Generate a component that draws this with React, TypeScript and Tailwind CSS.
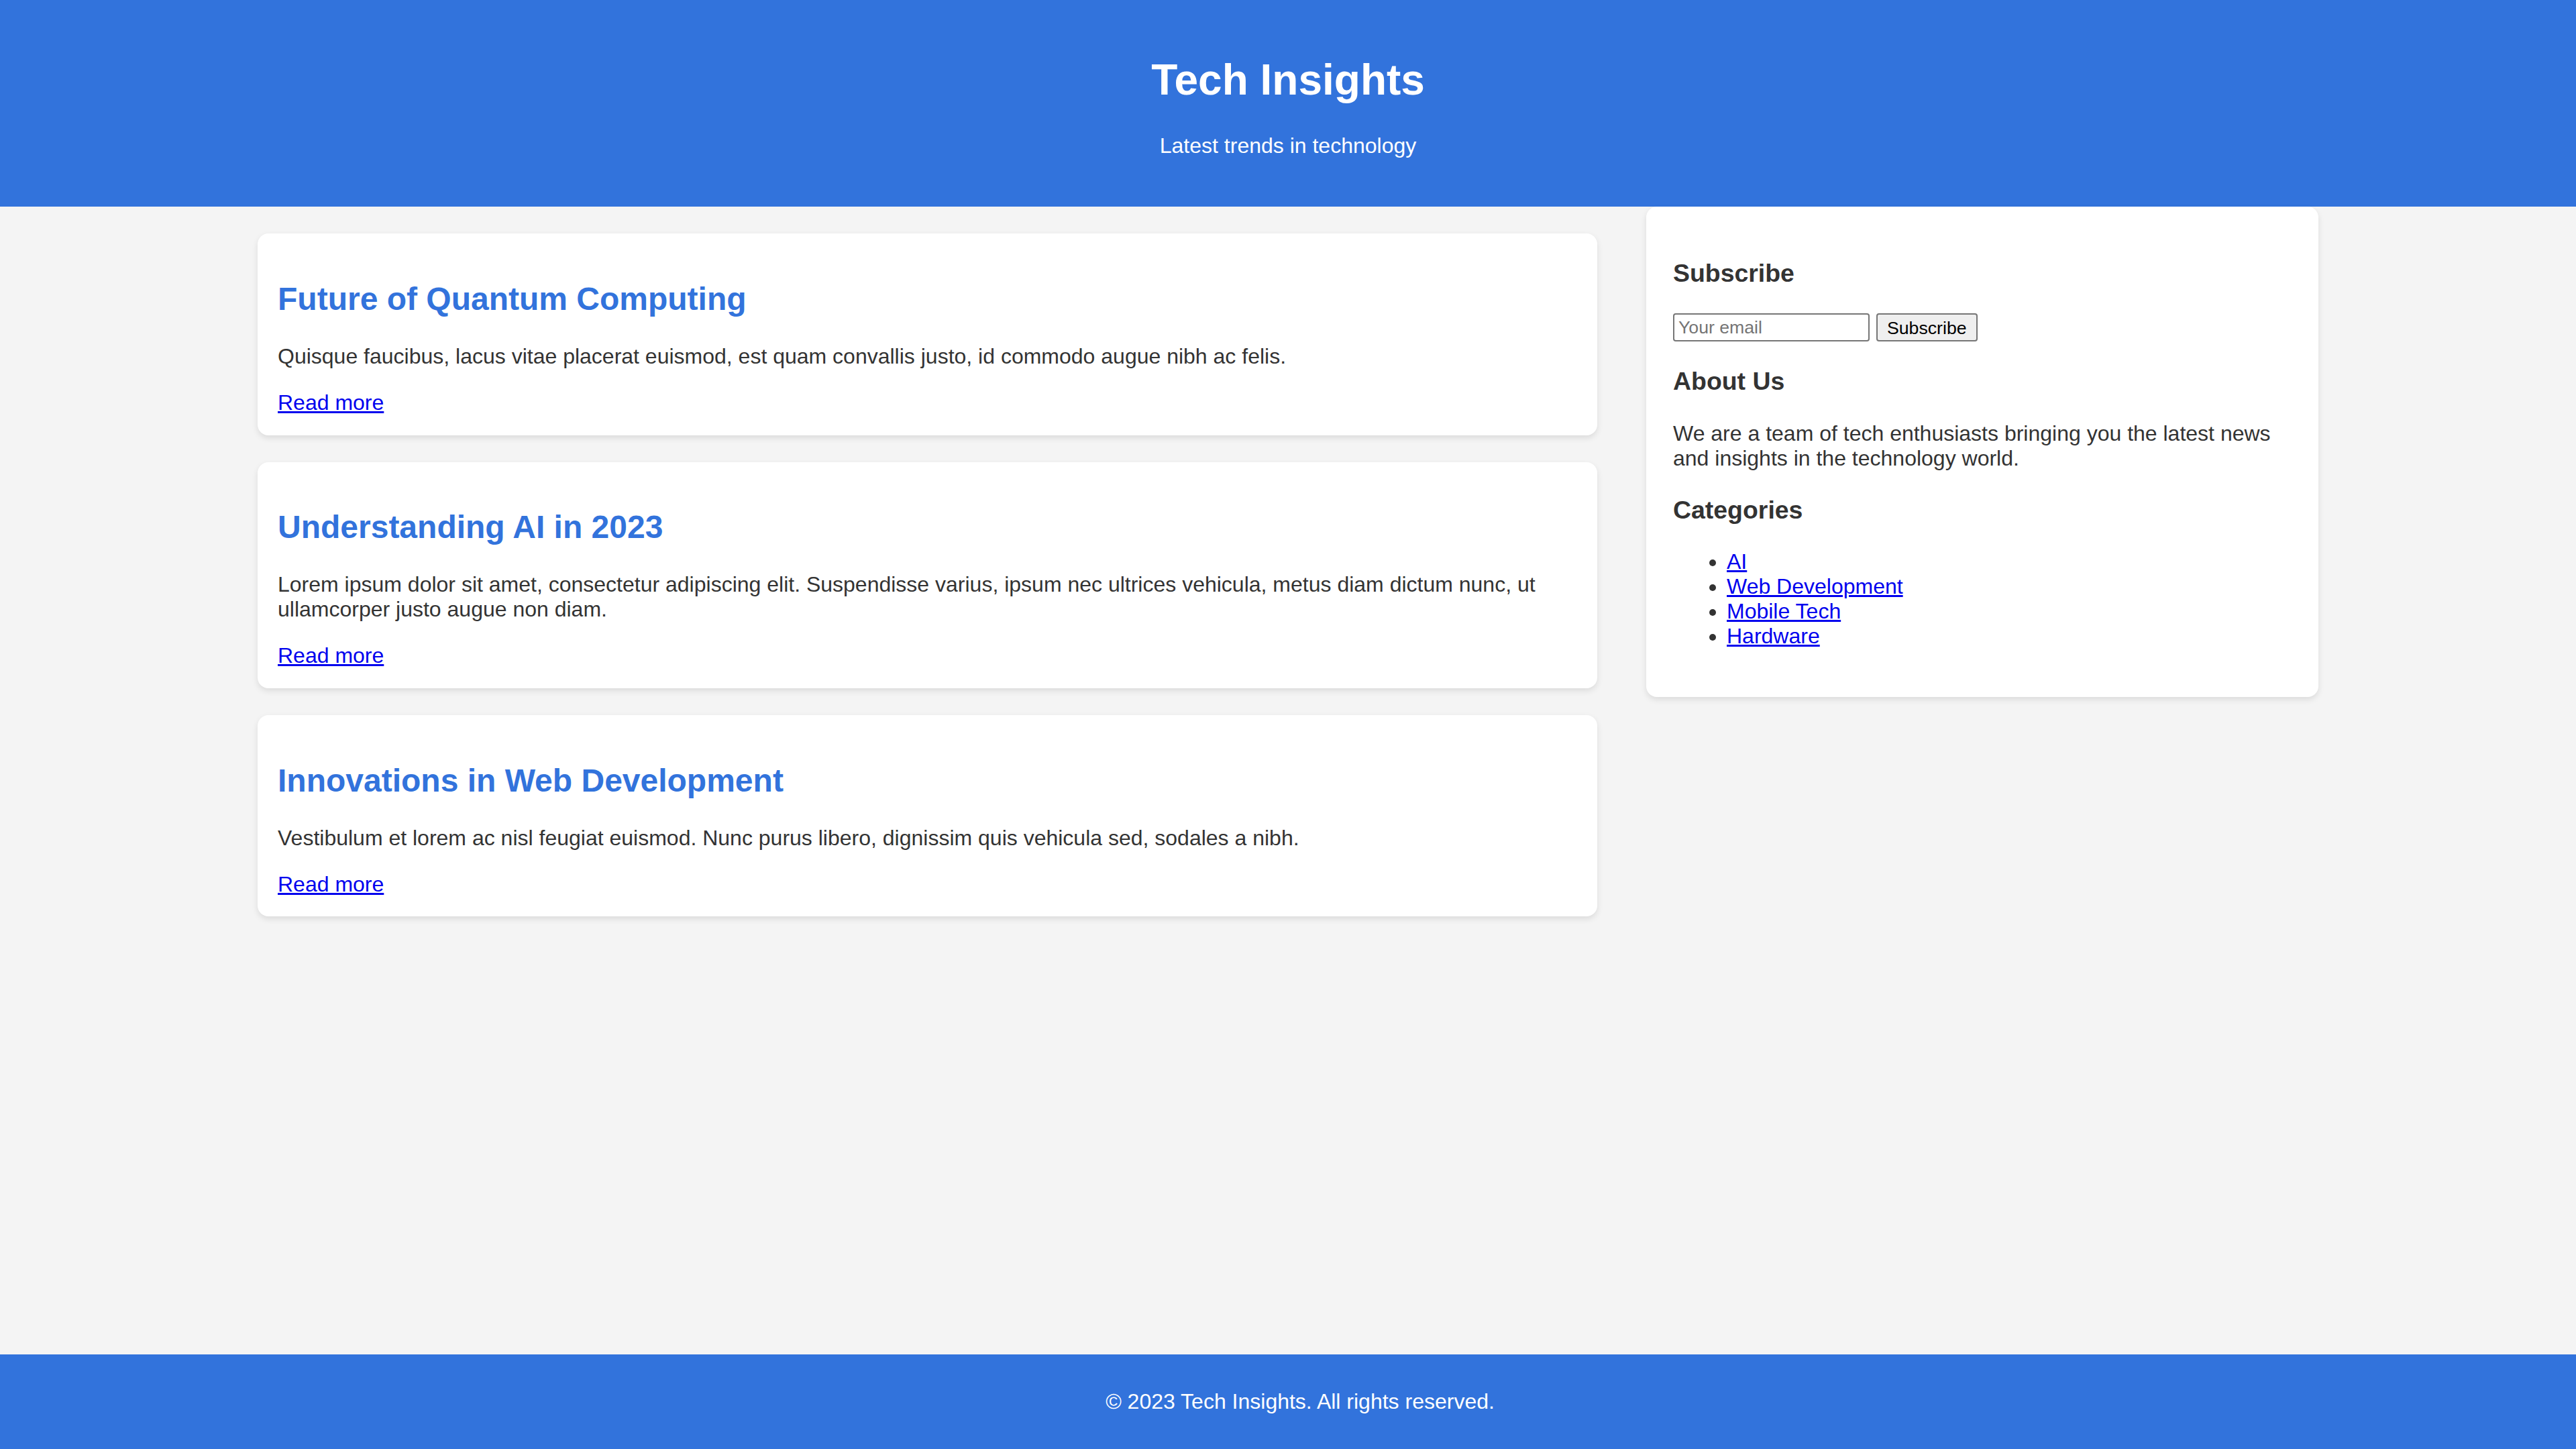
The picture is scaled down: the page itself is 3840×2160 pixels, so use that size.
const posts = [
  {
    title: 'Future of Quantum Computing',
    body: 'Quisque faucibus, lacus vitae placerat euismod, est quam convallis justo, id commodo augue nibh ac felis.',
  },
  {
    title: 'Understanding AI in 2023',
    body: 'Lorem ipsum dolor sit amet, consectetur adipiscing elit. Suspendisse varius, ipsum nec ultrices vehicula, metus diam dictum nunc, ut ullamcorper justo augue non diam.',
  },
  {
    title: 'Innovations in Web Development',
    body: 'Vestibulum et lorem ac nisl feugiat euismod. Nunc purus libero, dignissim quis vehicula sed, sodales a nibh.',
  },
]

const categories = ['AI', 'Web Development', 'Mobile Tech', 'Hardware']

const App = () => {
  return (
    <div className="flex min-h-screen flex-col bg-[#f4f4f4] font-['Liberation_Sans',Arial,sans-serif] text-[#333]">
      <header className="bg-[#3273dc] py-[40px] text-center text-white">
        <h1 className="my-[42.88px] text-[64px] font-bold leading-[73.6px]">Tech Insights</h1>
        <p className="my-[32px] text-[32px] leading-[36.8px]">Latest trends in technology</p>
      </header>

      <div className="mx-auto flex w-4/5 flex-1 items-start justify-between">
        <main className="flex w-[65%] flex-col gap-[40px] pt-[40px]">
          {posts.map((post) => (
            <article
              key={post.title}
              className="rounded-[16px] bg-white p-[30px] shadow-[0_4px_10px_rgba(0,0,0,0.1)]"
            >
              <h2 className="my-[39.84px] text-[48px] font-bold leading-[55.2px] text-[#3273dc]">
                {post.title}
              </h2>
              <p className="my-[32px] text-[32px] leading-[36.8px]">{post.body}</p>
              <div className="text-[32px] leading-[36.8px]">
                <a href="#" className="text-[#0000ee] underline">
                  Read more
                </a>
              </div>
            </article>
          ))}
        </main>

        <aside className="w-[1002px] rounded-[16px] bg-white p-[40px] shadow-[0_4px_10px_rgba(0,0,0,0.1)]">
          <h3 className="my-[37.44px] text-[37.44px] font-bold leading-[43px]">Subscribe</h3>
          <form className="flex h-[44px] items-center gap-[10px]" onSubmit={(e) => e.preventDefault()}>
            <input
              type="email"
              placeholder="Your email"
              className="h-[42px] w-[293px] rounded-[4px] border-2 border-[#767676] bg-white px-[6px] text-[26.67px] text-black placeholder:text-[#757575]"
            />
            <button
              type="submit"
              className="h-[42px] rounded-[4px] border-2 border-[#767676] bg-[#efefef] px-[14px] text-[26.67px] text-black"
            >
              Subscribe
            </button>
          </form>

          <h3 className="my-[37.44px] text-[37.44px] font-bold leading-[43px]">About Us</h3>
          <p className="my-[32px] text-[32px] leading-[36.8px]">
            We are a team of tech enthusiasts bringing you the latest news and insights in the technology world.
          </p>

          <h3 className="my-[37.44px] text-[37.44px] font-bold leading-[43px]">Categories</h3>
          <ul className="my-[32px] list-disc pl-[80px] text-[32px] leading-[36.8px]">
            {categories.map((c) => (
              <li key={c}>
                <a href="#" className="text-[#0000ee] underline">
                  {c}
                </a>
              </li>
            ))}
          </ul>
        </aside>
      </div>

      <footer className="bg-[#3273dc] py-[20px] text-center text-white">
        <p className="my-[32px] pl-[36px] text-[32px] leading-[36.8px]">© 2023 Tech Insights. All rights reserved.</p>
      </footer>
    </div>
  )
}

export default App
